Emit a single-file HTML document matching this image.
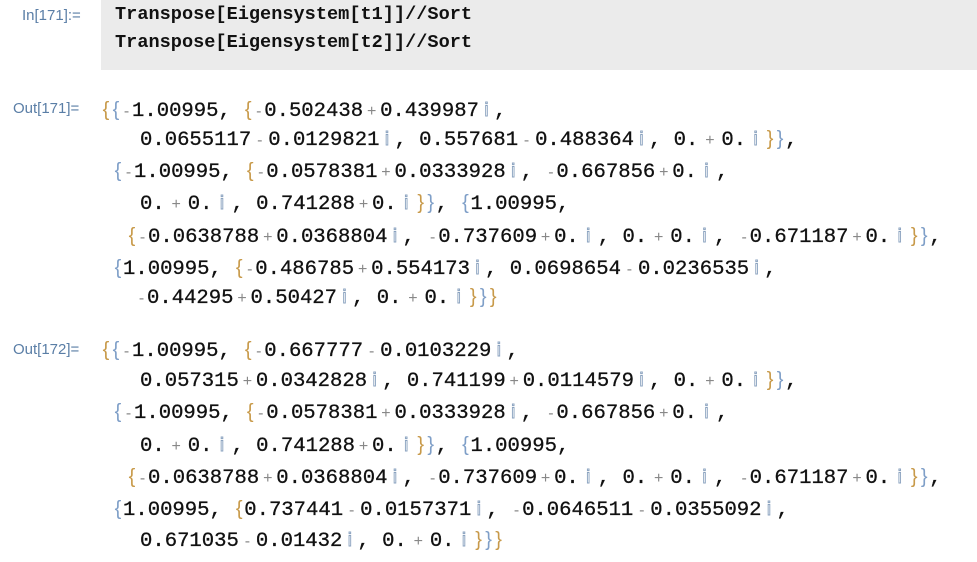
<!DOCTYPE html>
<html><head><meta charset="utf-8"><style>
body{margin:0;width:977px;height:562px;background:#fff;overflow:hidden;position:relative;font-family:"Liberation Mono",monospace;}
.box{position:absolute;left:101px;top:0;width:876px;height:70px;background:#ebebeb;}
.lbl{position:absolute;font-family:"Liberation Sans",sans-serif;font-size:15px;color:#5a7ea6;}
.in{position:absolute;left:115px;font-weight:bold;font-size:18.6px;color:#111;white-space:pre;line-height:20px;}
.l{position:absolute;font-size:20.6px;color:#111;white-space:pre;line-height:20px;-webkit-text-stroke:0.3px #111;}
.a,.b{font-family:"Liberation Sans",sans-serif;font-size:20px;-webkit-text-stroke:0;display:inline-block;width:10px;text-align:center;}
.a{color:#c89a4a;}
.b{color:#7f9fc8;}
.o,.p{font-family:"Liberation Sans",sans-serif;font-size:16px;color:#888;-webkit-text-stroke:0;display:inline-block;width:17px;text-align:center;}
.p{width:23px;}
.m{font-family:"Liberation Sans",sans-serif;font-size:16px;color:#888;-webkit-text-stroke:0;display:inline-block;width:11px;text-align:center;}
.i,.j{font-family:"Liberation Sans",sans-serif;font-size:19px;color:#fff;-webkit-text-stroke:0.9px #8aa2bf;display:inline-block;width:15px;text-align:center;}
.j{width:19px;}
</style></head><body>
<div class="box"></div>
<div class="lbl" style="left:22px;top:7px">In[171]:=</div>
<div class="in" style="top:5px">Transpose[Eigensystem[t1]]//Sort</div>
<div class="in" style="top:33px">Transpose[Eigensystem[t2]]//Sort</div>

<div class="lbl" style="left:13px;top:100px">Out[171]=</div>
<div class="l" style="left:101px;top:100px"><span class="a">{</span><span class="b">{</span><span class="m">-</span>1.00995, <span class="a">{</span><span class="m">-</span>0.502438<span class="o">+</span>0.439987<span class="i">i</span>,</div>
<div class="l" style="left:140px;top:129px">0.0655117<span class="o">-</span>0.0129821<span class="i">i</span>, 0.557681<span class="o">-</span>0.488364<span class="i">i</span>, 0.<span class="p">+</span>0.<span class="j">i</span><span class="a">}</span><span class="b">}</span>,</div>
<div class="l" style="left:113px;top:161px"><span class="b">{</span><span class="m">-</span>1.00995, <span class="a">{</span><span class="m">-</span>0.0578381<span class="o">+</span>0.0333928<span class="i">i</span>, <span class="m">-</span>0.667856<span class="o">+</span>0.<span class="j">i</span>,</div>
<div class="l" style="left:140px;top:193px">0.<span class="p">+</span>0.<span class="j">i</span>, 0.741288<span class="o">+</span>0.<span class="j">i</span><span class="a">}</span><span class="b">}</span>, <span class="b">{</span>1.00995,</div>
<div class="l" style="left:127px;top:226px"><span class="a">{</span><span class="m">-</span>0.0638788<span class="o">+</span>0.0368804<span class="i">i</span>, <span class="m">-</span>0.737609<span class="o">+</span>0.<span class="j">i</span>, 0.<span class="p">+</span>0.<span class="j">i</span>, <span class="m">-</span>0.671187<span class="o">+</span>0.<span class="j">i</span><span class="a">}</span><span class="b">}</span>,</div>
<div class="l" style="left:113px;top:258px"><span class="b">{</span>1.00995, <span class="a">{</span><span class="m">-</span>0.486785<span class="o">+</span>0.554173<span class="i">i</span>, 0.0698654<span class="o">-</span>0.0236535<span class="i">i</span>,</div>
<div class="l" style="left:136px;top:287px"><span class="m">-</span>0.44295<span class="o">+</span>0.50427<span class="i">i</span>, 0.<span class="p">+</span>0.<span class="j">i</span><span class="a">}</span><span class="b">}</span><span class="a">}</span></div>

<div class="lbl" style="left:13px;top:341px">Out[172]=</div>
<div class="l" style="left:101px;top:340px"><span class="a">{</span><span class="b">{</span><span class="m">-</span>1.00995, <span class="a">{</span><span class="m">-</span>0.667777<span class="o">-</span>0.0103229<span class="i">i</span>,</div>
<div class="l" style="left:140px;top:370px">0.057315<span class="o">+</span>0.0342828<span class="i">i</span>, 0.741199<span class="o">+</span>0.0114579<span class="i">i</span>, 0.<span class="p">+</span>0.<span class="j">i</span><span class="a">}</span><span class="b">}</span>,</div>
<div class="l" style="left:113px;top:402px"><span class="b">{</span><span class="m">-</span>1.00995, <span class="a">{</span><span class="m">-</span>0.0578381<span class="o">+</span>0.0333928<span class="i">i</span>, <span class="m">-</span>0.667856<span class="o">+</span>0.<span class="j">i</span>,</div>
<div class="l" style="left:140px;top:435px">0.<span class="p">+</span>0.<span class="j">i</span>, 0.741288<span class="o">+</span>0.<span class="j">i</span><span class="a">}</span><span class="b">}</span>, <span class="b">{</span>1.00995,</div>
<div class="l" style="left:127px;top:467px"><span class="a">{</span><span class="m">-</span>0.0638788<span class="o">+</span>0.0368804<span class="i">i</span>, <span class="m">-</span>0.737609<span class="o">+</span>0.<span class="j">i</span>, 0.<span class="p">+</span>0.<span class="j">i</span>, <span class="m">-</span>0.671187<span class="o">+</span>0.<span class="j">i</span><span class="a">}</span><span class="b">}</span>,</div>
<div class="l" style="left:113px;top:499px"><span class="b">{</span>1.00995, <span class="a">{</span>0.737441<span class="o">-</span>0.0157371<span class="i">i</span>, <span class="m">-</span>0.0646511<span class="o">-</span>0.0355092<span class="i">i</span>,</div>
<div class="l" style="left:140px;top:530px">0.671035<span class="o">-</span>0.01432<span class="i">i</span>, 0.<span class="p">+</span>0.<span class="j">i</span><span class="a">}</span><span class="b">}</span><span class="a">}</span></div>
</body></html>
